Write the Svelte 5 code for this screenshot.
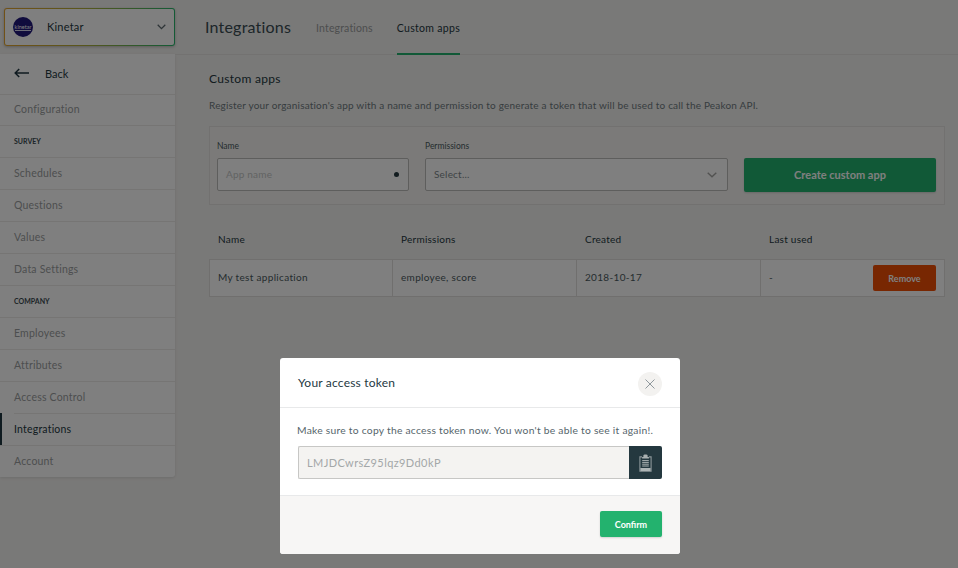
<script lang="ts">
  const navItems = [
    { label: 'Configuration' },
    { label: 'SURVEY', section: true },
    { label: 'Schedules' },
    { label: 'Questions' },
    { label: 'Values' },
    { label: 'Data Settings' },
    { label: 'COMPANY', section: true },
    { label: 'Employees' },
    { label: 'Attributes' },
    { label: 'Access Control' },
    { label: 'Integrations', active: true },
    { label: 'Account' }
  ];
</script>

<div class="page">
  <aside class="sidebar">
    <button type="button" class="switcher">
      <span class="switcher-inner">
        <span class="logo"><span>kinetar</span></span>
        <span class="company">Kinetar</span>
        <svg class="chev" width="9" height="6" viewBox="0 0 9 6" aria-hidden="true">
          <path d="M.7.8l3.8 3.8L8.3.8" fill="none" stroke="#5d6a70" stroke-width="1.3" />
        </svg>
      </span>
    </button>

    <nav class="nav">
      <div class="back">
        <svg width="15" height="10" viewBox="0 0 15 10" aria-hidden="true">
          <path d="M15 5H1.5M5.2 1L1.2 5l4 4" fill="none" stroke="#1f3540" stroke-width="1.5" />
        </svg>
        <span>Back</span>
      </div>
      {#each navItems as item}
        <div class="nav-row" class:section={item.section} class:active={item.active}>
          <span class="nav-text">{item.label}</span>
        </div>
      {/each}
    </nav>
  </aside>

  <main class="main">
    <header class="topbar">
      <h1>Integrations</h1>
      <div class="tabs">
        <span class="tab">Integrations</span>
        <span class="tab tab-active">Custom apps</span>
      </div>
    </header>

    <section class="content">
      <h2>Custom apps</h2>
      <p class="intro">Register your organisation's app with a name and permission to generate a token that will be used to call the Peakon API.</p>

      <div class="form-box">
        <div class="field name-field">
          <span class="label">Name</span>
          <div class="input">
            <span class="placeholder">App name</span>
            <span class="dot"></span>
          </div>
        </div>
        <div class="field perm-field">
          <span class="label">Permissions</span>
          <div class="input select">
            <span>Select...</span>
            <svg width="10" height="6" viewBox="0 0 10 6" aria-hidden="true">
              <path d="M.7.8L5 4.8 9.3.8" fill="none" stroke="#a5a5a3" stroke-width="1.4" />
            </svg>
          </div>
        </div>
        <button type="button" class="create">Create custom app</button>
      </div>

      <div class="table-head">
        <span>Name</span>
        <span>Permissions</span>
        <span>Created</span>
        <span>Last used</span>
      </div>
      <div class="table-row">
        <span class="cell">My test application</span>
        <span class="cell">employee, score</span>
        <span class="cell">2018-10-17</span>
        <span class="cell last">
          -
          <button type="button" class="remove">Remove</button>
        </span>
      </div>
    </section>
  </main>

  <div class="overlay">
    <div class="modal">
      <div class="modal-head">
        <span class="modal-title">Your access token</span>
        <button type="button" class="close" aria-label="Close">
          <svg width="10" height="10" viewBox="0 0 10 10" aria-hidden="true">
            <path d="M.5.5l9 9M9.5.5l-9 9" fill="none" stroke="#8f989d" stroke-width="1" />
          </svg>
        </button>
      </div>
      <div class="modal-body">
        <p>Make sure to copy the access token now. You won't be able to see it again!.</p>
        <div class="token">
          <span class="token-value">LMJDCwrsZ95lqz9Dd0kP</span>
          <button type="button" class="copy" aria-label="Copy">
            <svg width="13" height="18" viewBox="0 0 13 18" aria-hidden="true">
              <path d="M4.4 3V1.6C4.4.8 5.3.5 6.5.5s2.1.3 2.1 1.1V3h1.3v1.6H3.1V3z" fill="#a9b0b1" />
              <path d="M3 2.9H.9v14.4h11.2V2.9H10" fill="none" stroke="#8d979a" stroke-width="1.1" />
              <path d="M3.2 6.6h6.6M3.2 8.4h6.6M3.2 10.2h6.6M3.2 12h6.6" stroke="#a9b0b1" stroke-width="1" />
              <rect x="1.4" y="14" width="10.2" height="3" fill="#aeb5b6" />
            </svg>
          </button>
        </div>
      </div>
      <div class="modal-foot">
        <button type="button" class="confirm">Confirm</button>
      </div>
    </div>
  </div>
</div>

<style>
  :global(body) {
    margin: 0;
    background: #f3f2f0;
  }

  .page {
    position: relative;
    display: flex;
    width: 958px;
    height: 568px;
    overflow: hidden;
    background: #f3f2f0;
    color: #24383f;
    font-family: Lato, "Open Sans", sans-serif;
    font-size: 11px;
  }

  button {
    font-family: inherit;
    border: 0;
    padding: 0;
    cursor: pointer;
  }

  .sidebar {
    flex: 0 0 175px;
    width: 175px;
  }

  .switcher {
    display: block;
    width: 171px;
    height: 38px;
    margin: 8px 0 8px 4px;
    padding: 1px;
    border-radius: 3px;
    background: linear-gradient(90deg, #e2a32f, #b5ad3a 45%, #27b56c);
    box-shadow: 0 1px 3px rgba(0, 0, 0, 0.25);
  }

  .switcher-inner {
    display: flex;
    align-items: center;
    height: 100%;
    padding: 0 7px 0 8px;
    border-radius: 2px;
    background: #fff;
  }

  .logo {
    display: flex;
    align-items: center;
    justify-content: center;
    width: 20px;
    height: 20px;
    border-radius: 50%;
    background: #20187a;
    color: #fff;
    font-size: 5.5px;
    line-height: 6px;
  }

  .logo span {
    border-bottom: 1px solid #d9d8ef;
  }

  .company {
    margin-left: 14px;
    flex: 1;
    padding-bottom: 2px;
    text-align: left;
    font-size: 11px;
    color: #24383f;
    letter-spacing: 0.2px;
  }

  .chev {
    flex: none;
    margin-right: 1px;
  }

  .nav {
    background: #fff;
    border-radius: 0 0 3px 0;
    box-shadow: 0 1px 3px rgba(0, 0, 0, 0.1);
  }

  .back {
    display: flex;
    align-items: center;
    gap: 16px;
    height: 40px;
    padding-left: 14px;
    padding-bottom: 2px;
    box-sizing: border-box;
    font-size: 11px;
    color: #24383f;
  }

  .nav-row {
    height: 32px;
    padding-left: 14px;
    box-sizing: border-box;
    border-left: 0 solid #1e3640;
  }

  .back + .nav-row {
    height: 31px;
  }

  .nav-text {
    display: flex;
    align-items: center;
    height: 100%;
    border-top: 1px solid #ecebe9;
    box-sizing: border-box;
    padding-bottom: 1px;
    font-size: 10.5px;
    letter-spacing: 0.2px;
    color: #9a9d9e;
  }

  .back + .nav-row .nav-text {
    padding-bottom: 2px;
  }

  .section .nav-text {
    font-size: 7px;
    font-weight: 700;
    letter-spacing: 0;
    color: #3a4a51;
  }

  .nav-row:not(.active) .nav-text {
    margin-left: -14px;
    padding-left: 14px;
  }

  .active {
    border-left-width: 2px;
    padding-left: 12px;
  }

  .active .nav-text {
    color: #24383f;
  }

  .main {
    flex: 1;
    min-width: 0;
  }

  .topbar {
    display: flex;
    align-items: stretch;
    height: 55px;
    box-sizing: border-box;
    padding-left: 30px;
    border-bottom: 1px solid #e6e5e3;
  }

  h1 {
    margin: 16px 0 0;
    font-size: 16px;
    line-height: 22px;
    font-weight: 400;
    letter-spacing: 0.2px;
    color: #3a4c53;
  }

  .tabs {
    display: flex;
    gap: 24px;
    margin-left: 25px;
  }

  .tab {
    height: 55px;
    box-sizing: border-box;
    padding-top: 21px;
    font-size: 10.5px;
    line-height: 14px;
    letter-spacing: 0.15px;
    color: #9a9d9e;
  }

  .tab-active {
    color: #24383f;
    letter-spacing: 0.3px;
    border-bottom: 2px solid #23b26e;
  }

  .content {
    padding: 15px 13px 0 34px;
  }

  h2 {
    margin: 0;
    font-size: 12px;
    line-height: 18px;
    font-weight: 400;
    letter-spacing: 0.3px;
    color: #24383f;
  }

  .intro {
    margin: 10px 0 0;
    font-size: 10px;
    line-height: 14px;
    letter-spacing: 0.19px;
    color: #6e7a7f;
  }

  .form-box {
    display: flex;
    align-items: flex-end;
    height: 79px;
    margin-top: 14px;
    padding: 0 8px 12px 7px;
    box-sizing: border-box;
    background: #f6f5f3;
    border: 1px solid #e4e3e1;
  }

  .field {
    display: flex;
    flex-direction: column;
    margin-bottom: 1px;
  }

  .name-field {
    width: 192px;
    margin-right: 16px;
  }

  .perm-field {
    width: 303px;
    margin-right: 16px;
  }

  .label {
    font-size: 8.5px;
    line-height: 12px;
    margin-bottom: 6px;
    color: #4b5a60;
  }

  .input {
    display: flex;
    align-items: center;
    justify-content: space-between;
    height: 33px;
    box-sizing: border-box;
    padding: 0 8px 2px;
    background: #fff;
    border: 1px solid #bdbcba;
    border-radius: 2px;
    font-size: 10px;
    letter-spacing: 0.2px;
    color: #7d878b;
  }

  .placeholder {
    color: #c4c6c6;
  }

  .dot {
    width: 5px;
    height: 5px;
    margin: 2px 1px 0 0;
    border-radius: 50%;
    background: #24383f;
  }

  .select {
    padding-right: 10px;
  }

  .select svg {
    margin-top: 2px;
  }

  .create {
    width: 192px;
    height: 34px;
    padding-bottom: 2px;
    border-radius: 2px;
    background: #23b26e;
    color: #fff;
    font-size: 11px;
    font-weight: 700;
    box-shadow: 0 1px 2px rgba(0, 0, 0, 0.15);
  }

  .table-head,
  .table-row {
    display: grid;
    grid-template-columns: 183px 184px 184px 1fr;
  }

  .table-head {
    margin-top: 25px;
    height: 29px;
    font-size: 10px;
    line-height: 18px;
    letter-spacing: 0.25px;
    color: #24383f;
  }

  .table-head span {
    padding-left: 9px;
  }

  .table-row {
    height: 38px;
    box-sizing: border-box;
    background: #fff;
    border: 1px solid #e0dfdd;
    font-size: 10px;
    letter-spacing: 0.32px;
    color: #4b5a60;
  }

  .cell {
    display: flex;
    align-items: center;
    padding: 0 0 2px 8px;
    border-right: 1px solid #e0dfdd;
  }

  .last {
    justify-content: space-between;
    padding-right: 8px;
    border-right: 0;
  }

  .remove {
    width: 63px;
    height: 26px;
    margin-bottom: -2px;
    border-radius: 2px;
    background: #f04e04;
    color: #fff;
    font-size: 9px;
    font-weight: 700;
  }

  .overlay {
    position: absolute;
    inset: 0;
    z-index: 10;
    display: flex;
    justify-content: center;
    align-items: flex-start;
    padding: 358px 0 0 2px;
    box-sizing: border-box;
    background: rgba(0, 0, 0, 0.5);
  }

  .modal {
    width: 400px;
    height: 196px;
    display: flex;
    flex-direction: column;
    overflow: hidden;
    background: #fff;
    border-radius: 3px;
  }

  .modal-head {
    display: flex;
    align-items: center;
    justify-content: space-between;
    height: 50px;
    box-sizing: border-box;
    padding: 2px 18px 0 18px;
    border-bottom: 1px solid #e8e9ea;
  }

  .modal-title {
    padding-bottom: 2px;
    font-size: 12px;
    letter-spacing: 0.2px;
    color: #24383f;
  }

  .close {
    display: flex;
    align-items: center;
    justify-content: center;
    width: 24px;
    height: 24px;
    border-radius: 50%;
    background: #f3f2f0;
  }

  .modal-body {
    height: 88px;
    box-sizing: border-box;
    padding: 14px 18px 0 17px;
    border-bottom: 1px solid #e8e9ea;
  }

  .modal-body p {
    margin: 0;
    font-size: 10.3px;
    line-height: 16px;
    letter-spacing: 0.25px;
    white-space: nowrap;
    color: #56656b;
  }

  .token {
    display: flex;
    height: 33px;
    margin: 8px 0 0 1px;
  }

  .token-value {
    flex: 1;
    display: flex;
    align-items: center;
    padding-left: 8px;
    background: #f4f3f1;
    border: 1px solid #c7c7c5;
    border-right: 0;
    border-radius: 2px 0 0 2px;
    font-size: 11px;
    letter-spacing: 0.4px;
    color: #a3a7a8;
  }

  .copy {
    display: flex;
    align-items: center;
    justify-content: center;
    width: 33px;
    background: #24383f;
    border-radius: 0 2px 2px 0;
  }

  .modal-foot {
    flex: 1;
    display: flex;
    justify-content: flex-end;
    align-items: center;
    padding: 0 18px 2px;
    background: #f7f6f5;
  }

  .confirm {
    width: 62px;
    height: 26px;
    border-radius: 2px;
    background: #23b26e;
    color: #fff;
    font-size: 9px;
    font-weight: 700;
    box-shadow: 0 1px 2px rgba(0, 0, 0, 0.15);
  }
</style>
